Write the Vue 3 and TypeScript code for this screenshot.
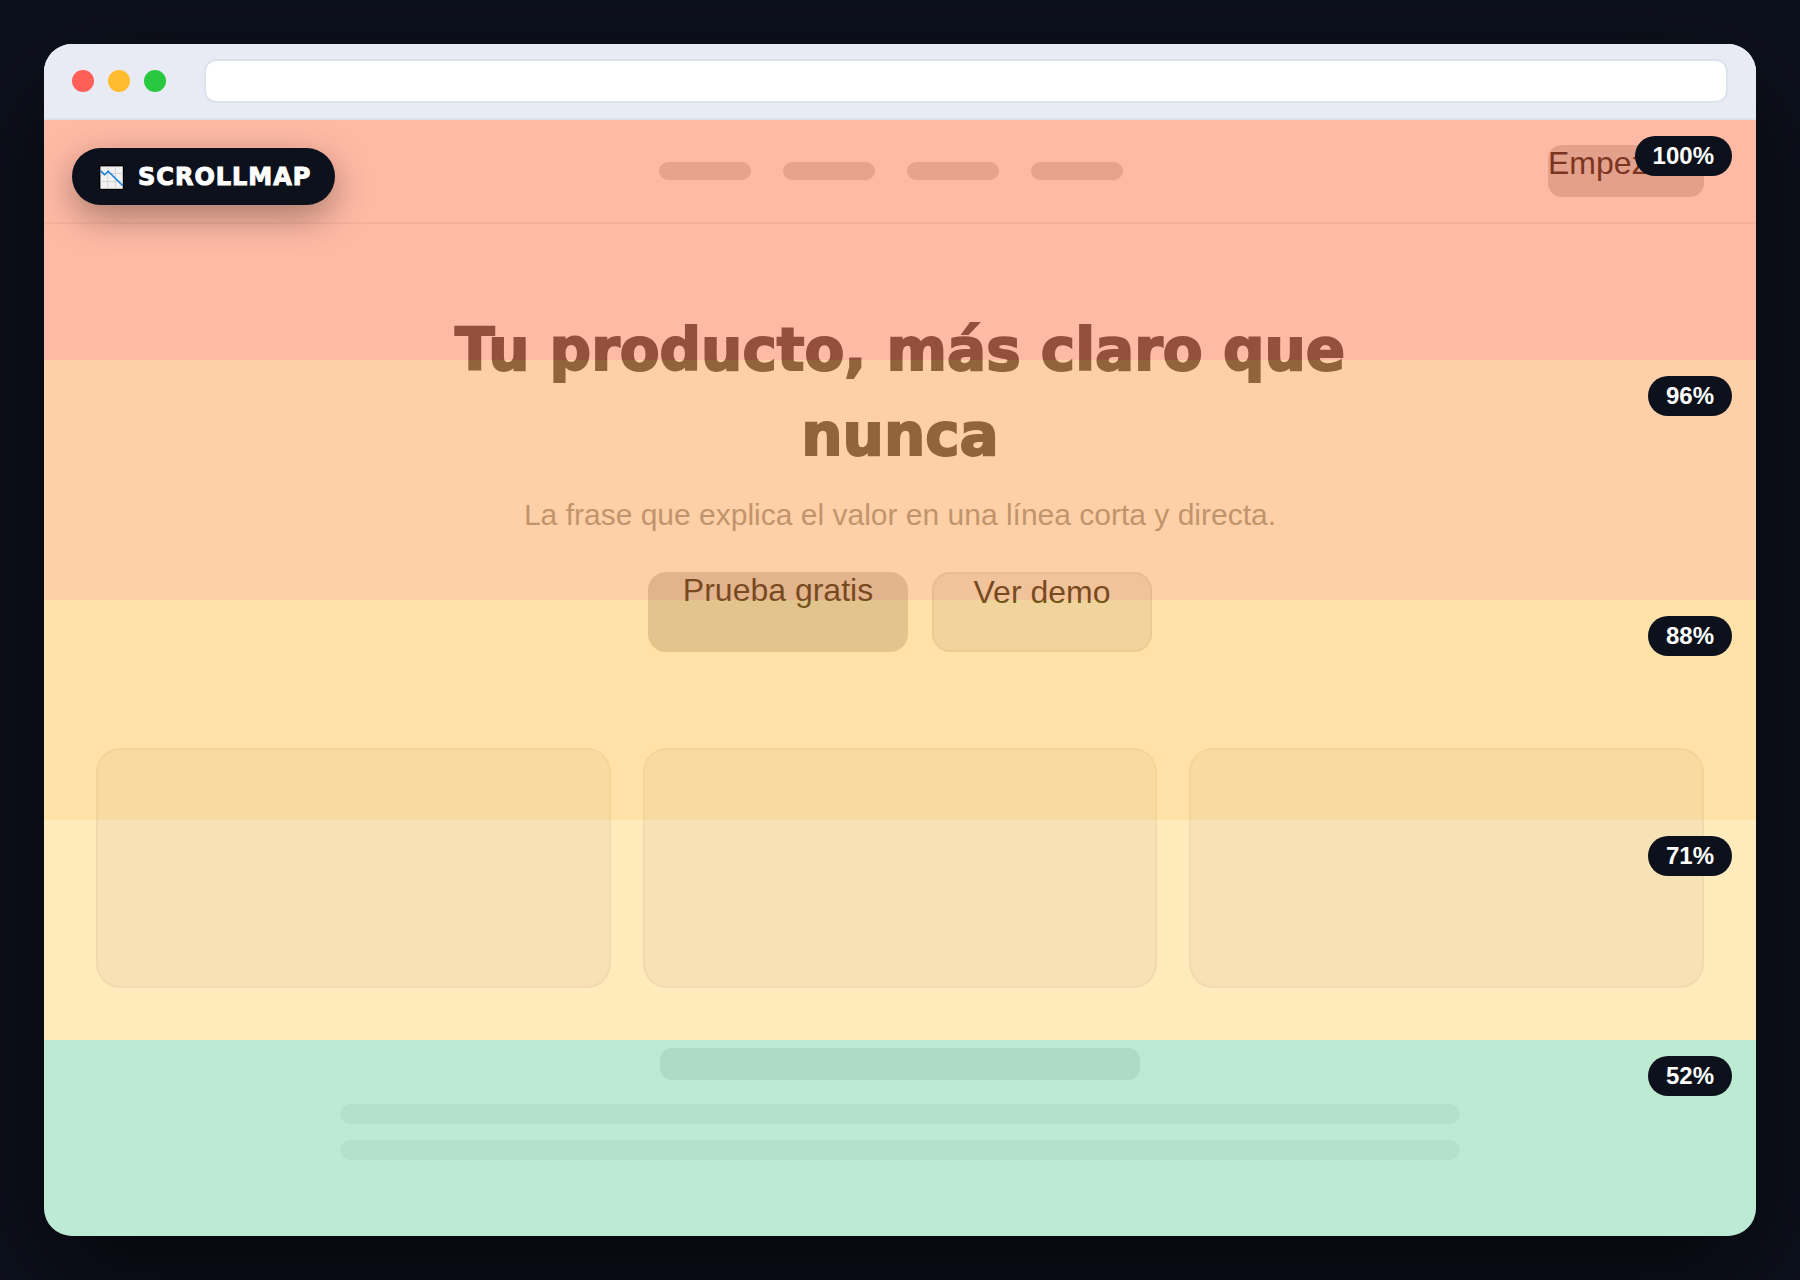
<script setup lang="ts">
interface Zone {
  reach: number
  tone: string
}

const zones: Zone[] = [
  { reach: 100, tone: 'hot' },
  { reach: 96, tone: 'warm' },
  { reach: 88, tone: 'amber' },
  { reach: 71, tone: 'mild' },
  { reach: 52, tone: 'cool' },
]
</script>

<template>
  <main class="stage">
    <section class="browser">
      <header class="chrome">
        <span class="dot red"></span>
        <span class="dot yellow"></span>
        <span class="dot green"></span>
        <input class="address" type="text" aria-label="Dirección" />
      </header>

      <div class="viewport">
        <div class="page">
          <nav class="nav">
            <span class="logo"></span>
            <div class="links">
              <a v-for="n in 4" :key="n" class="link" href="#" :aria-label="`Enlace ${n}`"></a>
            </div>
            <button class="cta" type="button">Empezar</button>
          </nav>

          <section class="hero">
            <h1>Tu producto, más claro que nunca</h1>
            <p>La frase que explica el valor en una línea corta y directa.</p>
            <div class="actions">
              <button class="primary" type="button">Prueba gratis</button>
              <button class="secondary" type="button">Ver demo</button>
            </div>
          </section>

          <section class="cards">
            <article v-for="n in 3" :key="n" class="card"></article>
          </section>

          <section class="copy">
            <div class="copy-title"></div>
            <div class="copy-line"></div>
            <div class="copy-line"></div>
          </section>
        </div>

        <div class="overlay">
          <div v-for="zone in zones" :key="zone.reach" class="zone" :class="zone.tone">
            <span class="reach">{{ zone.reach }}%</span>
          </div>
        </div>

        <div class="badge">
          <svg class="chart" viewBox="0 0 25 25" aria-hidden="true">
            <rect width="25" height="25" fill="#000" />
            <rect x="1.4" y="1.4" width="22.4" height="22.4" fill="#f1f1f1" />
            <path d="M8.7 1.4v22.4M16.4 1.4v22.4M1.4 8.5h22.4M1.4 16.4h22.4" stroke="#d3d3d3" stroke-width="1" />
            <path d="M1.4 5.6 5.6 9.7 9.2 6.3 23.8 20.8" fill="none" stroke="#0f7bdc" stroke-width="1.5" />
          </svg>
          <span>SCROLLMAP</span>
        </div>
      </div>
    </section>
  </main>
</template>

<style>
body {
  margin: 0;
  background: #0d111c;
}
</style>

<style scoped>
.stage {
  box-sizing: border-box;
  min-height: 100vh;
  padding: 44px;
  display: flex;
  background: #0d111c;
  font-family: "Liberation Sans", Arial, sans-serif;
  overflow: hidden;
}

.browser {
  flex: 1;
  min-width: 0;
  display: flex;
  flex-direction: column;
  border-radius: 28px;
  overflow: hidden;
  background: #fff;
  box-shadow: 0 40px 120px rgba(0, 0, 0, 0.6);
}

.chrome {
  display: flex;
  align-items: center;
  gap: 14px;
  padding: 15px 28px;
  background: #e8ebf3;
  border-bottom: 2px solid #dce3ed;
}

.dot {
  width: 22px;
  height: 22px;
  border-radius: 50%;
}

.red {
  background: #ff5f57;
}

.yellow {
  background: #febc2e;
}

.green {
  background: #28c840;
}

.address {
  box-sizing: border-box;
  flex: 1;
  min-width: 0;
  height: 44px;
  margin-left: 24px;
  padding: 0 16px;
  border: 2px solid #dce3ed;
  border-radius: 12px;
  background: #fff;
  font: 24px "Liberation Sans", Arial, sans-serif;
}

.viewport {
  position: relative;
  flex: 1;
}

.nav {
  display: flex;
  align-items: center;
  justify-content: space-between;
  padding: 25px 52px;
  border-bottom: 2px solid #eee;
}

.logo {
  width: 138px;
  height: 28px;
}

.links {
  display: flex;
  gap: 32px;
}

.link {
  width: 92px;
  height: 18px;
  border-radius: 9px;
  background: #d1d3d4;
}

button {
  box-sizing: border-box;
  display: flex;
  align-items: flex-start;
  justify-content: center;
  padding: 0;
  border: 0;
  color: #000;
  font: 32px/36px "Liberation Sans", Arial, sans-serif;
}

.cta {
  justify-content: flex-start;
  width: 156px;
  height: 52px;
  border-radius: 14px;
  background: #cacdce;
}

.hero {
  padding: 84px 52px 96px;
  text-align: center;
}

h1 {
  max-width: 1000px;
  margin: 0 auto;
  color: #323436;
  font: 700 58px/85px "DejaVu Sans", sans-serif;
  -webkit-text-stroke: 2px #323436;
}

p {
  margin: 20px 0 40px;
  color: #8c8f92;
  font-size: 30px;
  line-height: 34px;
}

.actions {
  display: flex;
  justify-content: center;
  gap: 24px;
}

.primary,
.secondary {
  height: 80px;
  border-radius: 18px;
}

.primary {
  width: 260px;
  background: #cacbce;
}

.secondary {
  width: 220px;
  border: 2px solid #d7d8da;
  background: #e6e6e8;
}

.cards {
  display: grid;
  grid-template-columns: repeat(3, 1fr);
  gap: 32px;
  padding: 0 52px 60px;
}

.card {
  box-sizing: border-box;
  height: 240px;
  border: 2px solid #e8e8e9;
  border-radius: 24px;
  background: #f2f2f3;
}

.copy {
  display: flex;
  flex-direction: column;
  align-items: center;
  gap: 16px;
  padding: 0 52px 76px;
}

.copy-title {
  width: 480px;
  max-width: 100%;
  height: 32px;
  margin-bottom: 8px;
  border-radius: 12px;
  background: #e8e8e9;
}

.copy-line {
  width: 1120px;
  max-width: 100%;
  height: 20px;
  border-radius: 10px;
  background: #f2f2f3;
}

.overlay {
  position: absolute;
  inset: 0;
  display: flex;
  flex-direction: column;
}

.zone {
  box-sizing: border-box;
  display: flex;
  align-items: flex-start;
  justify-content: flex-end;
  height: 220px;
  padding: 16px 24px;
}

.hot {
  height: 240px;
  background: rgba(255, 110, 66, 0.48);
}

.warm {
  height: 240px;
  background: rgba(253, 156, 69, 0.47);
}

.amber {
  background: rgba(255, 190, 62, 0.45);
}

.mild {
  background: rgba(255, 193, 52, 0.33);
}

.cool {
  flex: 1;
  background: rgba(62, 194, 126, 0.35);
}

.reach {
  padding: 6px 18px;
  border-radius: 20px;
  background: #0d111c;
  color: #fff;
  font-size: 24px;
  font-weight: 700;
  line-height: 28px;
}

.badge {
  position: absolute;
  top: 28px;
  left: 28px;
  display: flex;
  align-items: center;
  gap: 14px;
  padding: 13px 24px 11px 27px;
  border-radius: 30px;
  background: #0d111c;
  box-shadow: 0 12px 36px rgba(0, 0, 0, 0.35);
  color: #fff;
  font: 700 24px/33px "DejaVu Sans", sans-serif;
  letter-spacing: 1px;
  -webkit-text-stroke: 1px #fff;
}

.chart {
  width: 25px;
  height: 25px;
}
</style>
